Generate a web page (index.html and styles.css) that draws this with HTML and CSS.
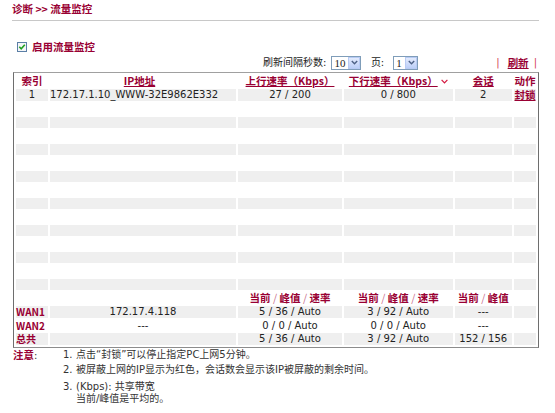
FILE: index.html
```html
<!DOCTYPE html>
<html lang="zh-CN">
<head>
<meta charset="utf-8">
<title>流量监控</title>
<link rel="stylesheet" href="styles.css">
</head>
<body>
<div class="page">
  <div class="title">诊断 &gt;&gt; 流量监控</div>

  <div class="enable">
    <svg class="chk" width="10" height="10" viewBox="0 0 10 10">
      <rect x="0.5" y="0.5" width="9" height="9" fill="#f4f6f8" stroke="#5b7fa6"/>
      <polyline points="2.3,4.8 4.2,6.8 7.8,2.8" fill="none" stroke="#21a121" stroke-width="1.6"/>
    </svg>
    <span class="enable-label">启用流量监控</span>
  </div>

  <div class="toolbar">
    <span class="lbl">刷新间隔秒数:</span>
    <span class="sel sel-10"><span class="val">10</span><span class="arr"><svg width="7" height="5" viewBox="0 0 7 5"><polyline points="0.8,1 3.5,3.8 6.2,1" fill="none" stroke="#4d6185" stroke-width="1.4"/></svg></span></span>
    <span class="lbl lbl-page">页:</span>
    <span class="sel sel-1"><span class="val">1</span><span class="arr"><svg width="7" height="5" viewBox="0 0 7 5"><polyline points="0.8,1 3.5,3.8 6.2,1" fill="none" stroke="#4d6185" stroke-width="1.4"/></svg></span></span>
    <span class="refresh"><span class="bar">|</span><a class="link refresh-link" href="#">刷新</a><span class="bar bar-r">|</span></span>
  </div>

  <table class="grid">
    <colgroup>
      <col class="c1"><col class="c2"><col class="c3"><col class="c4"><col class="c5"><col class="c6">
    </colgroup>
    <thead>
      <tr class="head">
        <th>索引</th>
        <th class="ipcol"><a class="link" href="#">IP地址</a></th>
        <th><a class="link" href="#">上行速率（Kbps）</a></th>
        <th><a class="link" href="#">下行速率（Kbps）</a><svg class="sort" width="7" height="5" viewBox="0 0 7 5"><polyline points="0.6,0.8 3.5,3.8 6.4,0.8" fill="none" stroke="#d4173f" stroke-width="1.2"/></svg></th>
        <th><a class="link" href="#">会话</a></th>
        <th>动作</th>
      </tr>
    </thead>
    <tbody>
      <tr class="row g">
        <td class="ctr">1</td>
        <td class="ip">172.17.1.10_WWW-32E9862E332</td>
        <td class="ctr">27 / 200</td>
        <td class="ctr">0 / 800</td>
        <td class="ctr">2</td>
        <td class="ctr"><a class="link act" href="#">封锁</a></td>
      </tr>
      <tr class="row"><td></td><td></td><td></td><td></td><td></td><td></td></tr>
      <tr class="row g"><td></td><td></td><td></td><td></td><td></td><td></td></tr>
      <tr class="row"><td></td><td></td><td></td><td></td><td></td><td></td></tr>
      <tr class="row g"><td></td><td></td><td></td><td></td><td></td><td></td></tr>
      <tr class="row"><td></td><td></td><td></td><td></td><td></td><td></td></tr>
      <tr class="row g"><td></td><td></td><td></td><td></td><td></td><td></td></tr>
      <tr class="row"><td></td><td></td><td></td><td></td><td></td><td></td></tr>
      <tr class="row g"><td></td><td></td><td></td><td></td><td></td><td></td></tr>
      <tr class="row"><td></td><td></td><td></td><td></td><td></td><td></td></tr>
      <tr class="row g"><td></td><td></td><td></td><td></td><td></td><td></td></tr>
      <tr class="row"><td></td><td></td><td></td><td></td><td></td><td></td></tr>
      <tr class="row g"><td></td><td></td><td></td><td></td><td></td><td></td></tr>
      <tr class="row"><td></td><td></td><td></td><td></td><td></td><td></td></tr>
      <tr class="row g"><td></td><td></td><td></td><td></td><td></td><td></td></tr>
      <tr class="sub">
        <td></td><td></td>
        <td class="subh">当前 <span class="sl">/</span> 峰值 <span class="sl">/</span> 速率</td>
        <td class="subh">当前 <span class="sl">/</span> 峰值 <span class="sl">/</span> 速率</td>
        <td class="subh">当前 <span class="sl">/</span> 峰值</td>
        <td></td>
      </tr>
      <tr class="row g">
        <td class="wan">WAN1</td>
        <td class="ctr ipc">172.17.4.118</td>
        <td class="ctr">5 / 36 / Auto</td>
        <td class="ctr">3 / 92 / Auto</td>
        <td class="ctr">---</td>
        <td></td>
      </tr>
      <tr class="row">
        <td class="wan">WAN2</td>
        <td class="ctr ipc">---</td>
        <td class="ctr">0 / 0 / Auto</td>
        <td class="ctr">0 / 0 / Auto</td>
        <td class="ctr">---</td>
        <td></td>
      </tr>
      <tr class="row g">
        <td class="wan">总共</td>
        <td class="ipc"></td>
        <td class="ctr">5 / 36 / Auto</td>
        <td class="ctr">3 / 92 / Auto</td>
        <td class="ctr">152 / 156</td>
        <td></td>
      </tr>
    </tbody>
  </table>

  <div class="notes">
    <div class="notes-label"><span class="nl">注意</span>:</div>
    <div class="notes-list">
      <div class="item"><span class="num">1.</span><span class="txt">点击“封锁”可以停止指定PC上网5分钟。</span></div>
      <div class="item item2"><span class="num">2.</span><span class="txt">被屏蔽上网的IP显示为红色，会话数会显示该IP被屏蔽的剩余时间。</span></div>
      <div class="item item3"><span class="num">3.</span><span class="txt">(Kbps): 共享带宽<br>当前/峰值是平均的。</span></div>
    </div>
  </div>
</div>
</body>
</html>
```

FILE: styles.css
```css
html, body {
  margin: 0;
  padding: 0;
  background: #ffffff;
}

body {
  font-family: "DejaVu Sans", "Noto Sans CJK SC", sans-serif;
  font-size: 10px;
  color: #222222;
}

.page {
  padding: 0 16px 0 12px;
}

.title {
  font-family: "Noto Sans CJK SC", sans-serif;
  font-weight: 700;
  font-size: 10.5px;
  line-height: 13px;
  color: #990033;
  padding-top: 2px;
  padding-bottom: 5px;
  border-bottom: 1.5px solid #c8c8c8;
}

.enable {
  display: flex;
  align-items: center;
  height: 13px;
  margin-top: 19px;
  padding-left: 5px;
  gap: 5px;
}

.chk {
  display: block;
  flex: none;
}

.enable-label {
  font-family: "Noto Sans CJK SC", sans-serif;
  font-weight: 700;
  font-size: 10.5px;
  line-height: 13px;
  color: #990033;
}

.toolbar {
  display: flex;
  align-items: center;
  height: 14px;
  margin-top: 2.5px;
  padding-left: 251px;
  line-height: 14px;
  color: #222222;
}

.lbl {
  white-space: nowrap;
}

.lbl-page {
  margin-left: 9.5px;
}

.sel {
  display: inline-flex;
  box-sizing: border-box;
  height: 14px;
  border: 1px solid #7f9db9;
  background: #ffffff;
  margin-left: 5px;
  align-items: stretch;
}

.sel-10 {
  width: 30px;
}

.sel-1 {
  width: 25px;
  margin-left: 9px;
}

.val {
  flex: 1;
  font-family: "Liberation Serif", serif;
  font-size: 11px;
  line-height: 12px;
  padding-left: 2px;
  color: #222222;
}

.arr {
  width: 12px;
  box-sizing: border-box;
  border: 1px solid #b8cbf4;
  background: linear-gradient(#e3ebfd, #bccff8);
  display: flex;
  align-items: center;
  justify-content: center;
}

.arr svg {
  display: block;
}

.refresh {
  margin-left: auto;
  display: flex;
  align-items: center;
  padding-right: 2px;
}

.bar {
  color: #d23a55;
}

.refresh-link {
  margin-left: 8px;
  margin-right: 5px;
}

.link {
  font-family: "Noto Sans CJK SC", sans-serif;
  font-weight: 700;
  font-size: 10.5px;
  color: #990033;
  text-decoration: underline;
  text-underline-offset: 1px;
}

.grid {
  margin-top: 2px;
  margin-left: 1px;
  width: 526px;
  box-sizing: border-box;
  table-layout: fixed;
  border-collapse: separate;
  border-spacing: 2px;
  border: 1px solid;
  border-color: #a0a0a0 #6e6e6e #8c8c8c #6e6e6e;
}

.c1 { width: 32px; }
.c2 { width: 186px; }
.c3 { width: 104px; }
.c4 { width: 108.5px; }
.c5 { width: 57.5px; }
.c6 { width: 22px; }

.grid th,
.grid td {
  padding: 0;
  white-space: nowrap;
}

.head th {
  height: 12px;
  line-height: 12px;
  font-family: "Noto Sans CJK SC", sans-serif;
  font-weight: 700;
  font-size: 10.5px;
  color: #990033;
  text-align: center;
}

.head .ipcol {
  padding-right: 7px;
}

.sort {
  margin-left: 3px;
  vertical-align: 1px;
}

.row td {
  height: 11.5px;
  line-height: 11.5px;
}

.row.g td {
  background: #efefef;
}

.ctr {
  text-align: center;
}

.ip {
  text-align: left;
}

.ipc {
  padding-right: 8px;
}

.act {
  font-size: 10.5px;
}

.sub td {
  height: 12px;
  line-height: 12px;
}

.subh {
  text-align: center;
  font-family: "Noto Sans CJK SC", sans-serif;
  font-weight: 700;
  font-size: 10.5px;
  color: #990033;
}

.sl {
  font-weight: 400;
  color: #c8708c;
}

.wan {
  padding-left: 1px;
  font-family: "Noto Sans CJK SC", sans-serif;
  font-weight: 700;
  font-size: 10px;
  color: #990033;
  text-align: left;
}

.notes {
  display: flex;
  margin-top: 1.5px;
  line-height: 11.5px;
  color: #333333;
}

.notes-label {
  width: 50px;
  padding-left: 1px;
  flex: none;
}

.nl {
  font-family: "Noto Sans CJK SC", sans-serif;
  font-weight: 700;
  font-size: 10.5px;
  color: #990033;
}

.notes-list {
  display: flex;
  flex-direction: column;
}

.item {
  display: flex;
}

.item2 {
  margin-top: 3.5px;
}

.item3 {
  margin-top: 5.5px;
}

.num {
  width: 13px;
  flex: none;
}
```
